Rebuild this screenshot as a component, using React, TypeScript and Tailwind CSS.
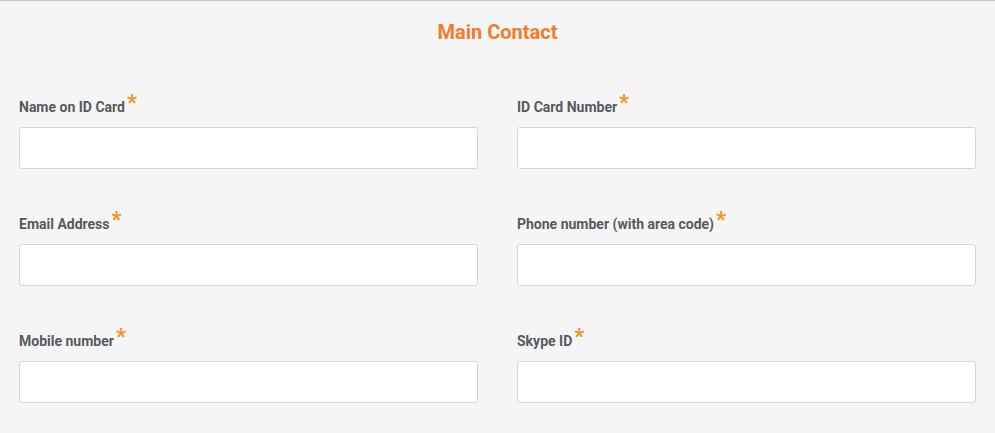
import React from 'react';

const FIELDS = [
  'Name on ID Card',
  'ID Card Number',
  'Email Address',
  'Phone number (with area code)',
  'Mobile number',
  'Skype ID',
];

const Field = ({ label }: { label: string }) => (
  <div className="flex flex-col">
    <label className="h-[20px] flex items-center text-[14px] font-bold leading-[20px] text-[#555a60]">
      {label}
      <span className="ml-[2px] relative top-[-4px] text-[22px] leading-none font-bold text-[#f7931e]">*</span>
    </label>
    <input
      type="text"
      className="mt-[10px] h-[42px] w-full rounded-[3px] border border-[#d3d6da] bg-white px-3 text-sm outline-none"
    />
  </div>
);

export default function App() {
  return (
    <div className="min-h-[433px] border-t border-[#c6c6c6] bg-[#f5f5f5] px-[19px] font-['Roboto',sans-serif]">
      <h2 className="pt-[19px] text-center text-[20px] font-bold leading-[24px] text-[#f37b2c]">Main Contact</h2>
      <div className="mt-[53px] grid grid-cols-2 gap-x-[39px] gap-y-[45px]">
        {FIELDS.map((f) => (
          <Field key={f} label={f} />
        ))}
      </div>
    </div>
  );
}
